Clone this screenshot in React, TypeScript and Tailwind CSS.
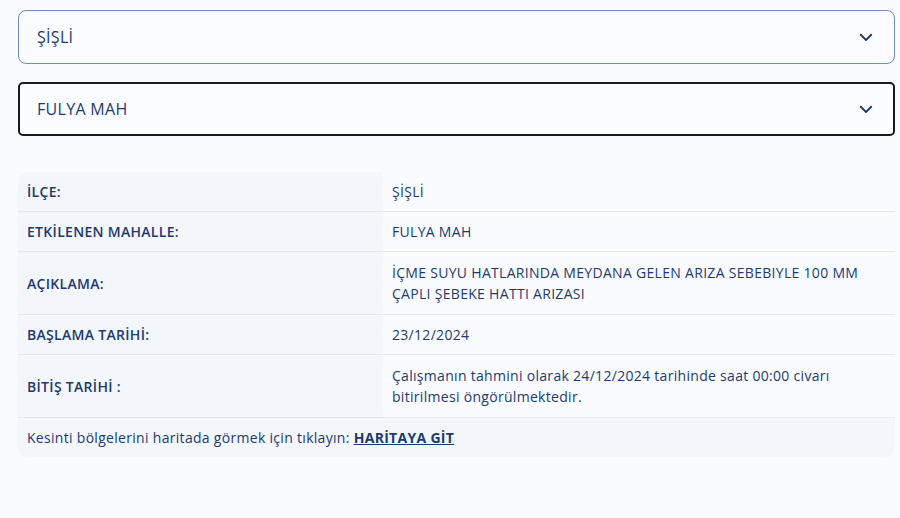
import React from "react";

const rows: { label: string; value: React.ReactNode; tall?: boolean }[] = [
  { label: "İLÇE:", value: "ŞİŞLİ" },
  { label: "ETKİLENEN MAHALLE:", value: "FULYA MAH" },
  {
    label: "AÇIKLAMA:",
    value: "İÇME SUYU HATLARINDA MEYDANA GELEN ARIZA SEBEBIYLE 100 MM ÇAPLI ŞEBEKE HATTI ARIZASI",
    tall: true,
  },
  { label: "BAŞLAMA TARİHİ:", value: "23/12/2024" },
  {
    label: "BİTİŞ TARİHİ :",
    value: "Çalışmanın tahmini olarak 24/12/2024 tarihinde saat 00:00 civarı bitirilmesi öngörülmektedir.",
    tall: true,
  },
];

function Chevron() {
  return (
    <svg width="18" height="18" viewBox="0 0 24 24" fill="none" stroke="#1e3a6e" strokeWidth="2.4" strokeLinecap="round" strokeLinejoin="round">
      <path d="M5 9l7 7 7-7" />
    </svg>
  );
}

function SelectBox({ text, active }: { text: string; active?: boolean }) {
  return (
    <div
      className={
        active
          ? "flex h-[54px] items-center justify-between rounded-[5px] border-2 border-[#1a1a1a] bg-[#fafcff] pl-[17px] pr-[18px]"
          : "flex h-[54px] items-center justify-between rounded-[8px] border border-[#6f8dc0] bg-[#fafcff] pl-[18px] pr-[19px]"
      }
    >
      <span className="text-[16px] tracking-[0.3px] text-[#1e3a6e]">{text}</span>
      <Chevron />
    </div>
  );
}

export default function App() {
  return (
    <div
      className="min-h-[518px] w-[900px] bg-[#f9fbfe] pl-[18px] pr-[5px] pt-[10px]"
      style={{ fontFamily: "'Open Sans', 'Noto Sans', sans-serif" }}
    >
      <div className="flex flex-col gap-[18px]">
        <SelectBox text="ŞİŞLİ" />
        <SelectBox text="FULYA MAH" active />
      </div>

      <div className="mt-[36px] overflow-hidden rounded-[10px] text-[14px] tracking-[0.3px] text-[#1e3a6e]">
        {rows.map((r) => (
          <div key={r.label} className="grid grid-cols-[364px_1fr] border-b border-[#e4e8ee]">
            <div className={`flex items-center bg-[#f3f6fb] pl-[9px] font-semibold ${r.tall ? "h-[62px]" : "h-[39px]"}`}>
              {r.label}
            </div>
            <div className={`flex items-center bg-[#f9fbfe] pl-[10px] pr-[20px] leading-[21px] ${r.tall ? "h-[62px]" : "h-[39px]"}`}>
              <span>{r.value}</span>
            </div>
          </div>
        ))}
        <div className="flex h-[39px] items-center bg-[#f3f6fb] pl-[9px]">
          <span>
            Kesinti bölgelerini haritada görmek için tıklayın:{" "}
            <a href="#" className="font-bold underline">
              HARİTAYA GİT
            </a>
          </span>
        </div>
      </div>
    </div>
  );
}
